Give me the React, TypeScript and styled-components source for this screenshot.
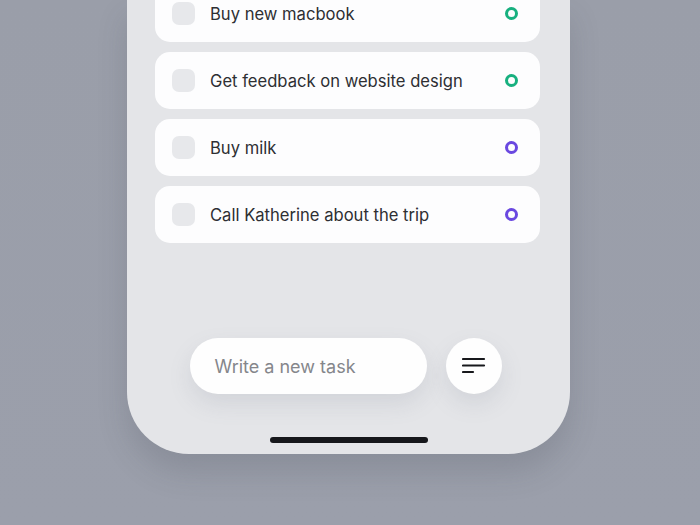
import React from "react";
import styled, { createGlobalStyle } from "styled-components";

const GlobalStyle = createGlobalStyle`
  html, body {
    margin: 0;
    padding: 0;
    background: #9a9eaa;
    font-family: Inter, "Noto Sans", sans-serif;
  }
`;

const Page = styled.main`
  width: 700px;
  height: 525px;
  overflow: hidden;
  background: linear-gradient(to bottom, #9a9ea9, #9b9fab);
`;

const Phone = styled.section`
  margin-left: 127px;
  width: 443px;
  height: 454px;
  background: #e4e5e8;
  border-radius: 0 0 62px 62px;
  box-shadow: 0 18px 30px rgba(60, 64, 80, 0.18);
  display: flex;
  flex-direction: column;
  align-items: center;
`;

const TaskList = styled.ul`
  list-style: none;
  margin: -15px 0 0;
  padding: 0 2px 0 0;
  width: 385px;
  display: flex;
  flex-direction: column;
  gap: 10px;
`;

const Card = styled.li`
  height: 57px;
  background: #fdfdfe;
  border-radius: 15px;
  display: flex;
  align-items: center;
  padding: 0 22px 0 17px;
  box-sizing: border-box;
`;

const Check = styled.span`
  width: 23px;
  height: 23px;
  border-radius: 7px;
  background: #e7e8eb;
  flex-shrink: 0;
`;

const Label = styled.span`
  flex: 1;
  margin-left: 15px;
  font-size: 16.6px;
  color: #2e2f33;
`;

const Dot = styled.span<{ color: string }>`
  width: 7px;
  height: 7px;
  border-radius: 50%;
  border: 3px solid ${({ color }) => color};
`;

const Spacer = styled.div`
  flex: 1;
`;

const Composer = styled.div`
  display: flex;
  align-items: center;
  gap: 19px;
  margin: 0 6px 43px 0;
`;

const TaskInput = styled.div`
  width: 237px;
  height: 56px;
  border-radius: 28px;
  background: #fefefe;
  box-shadow: 0 10px 22px rgba(120, 124, 140, 0.16);
  display: flex;
  align-items: center;
  padding-left: 25px;
  box-sizing: border-box;
  font-size: 18px;
  color: #85868b;
`;

const RoundButton = styled.button`
  width: 56px;
  height: 56px;
  border-radius: 50%;
  border: none;
  background: #fefefe;
  box-shadow: 0 10px 22px rgba(120, 124, 140, 0.16);
  display: flex;
  align-items: center;
  justify-content: center;
  padding: 0;
`;

const HomeBar = styled.div`
  width: 158px;
  height: 6px;
  border-radius: 3px;
  background: #16171b;
  margin-bottom: 11px;
`;

const tasks = [
  { text: "Buy new macbook", color: "#17b07f" },
  { text: "Get feedback on website design", color: "#17b07f" },
  { text: "Buy milk", color: "#6a48e0" },
  { text: "Call Katherine about the trip", color: "#6a48e0" },
];

export default function App() {
  return (
    <>
      <GlobalStyle />
      <Page>
        <Phone>
          <TaskList>
            {tasks.map((t) => (
              <Card key={t.text}>
                <Check />
                <Label>{t.text}</Label>
                <Dot color={t.color} />
              </Card>
            ))}
          </TaskList>
          <Spacer />
          <Composer>
            <TaskInput>Write a new task</TaskInput>
            <RoundButton aria-label="Sort">
              <svg width="24" height="18" viewBox="0 0 24 18">
                <g stroke="#17181c" strokeWidth="2.2" strokeLinecap="round">
                  <line x1="1" y1="2" x2="22" y2="2" />
                  <line x1="1" y1="8.5" x2="22" y2="8.5" />
                  <line x1="1" y1="15" x2="11" y2="15" />
                </g>
              </svg>
            </RoundButton>
          </Composer>
          <HomeBar />
        </Phone>
      </Page>
    </>
  );
}
